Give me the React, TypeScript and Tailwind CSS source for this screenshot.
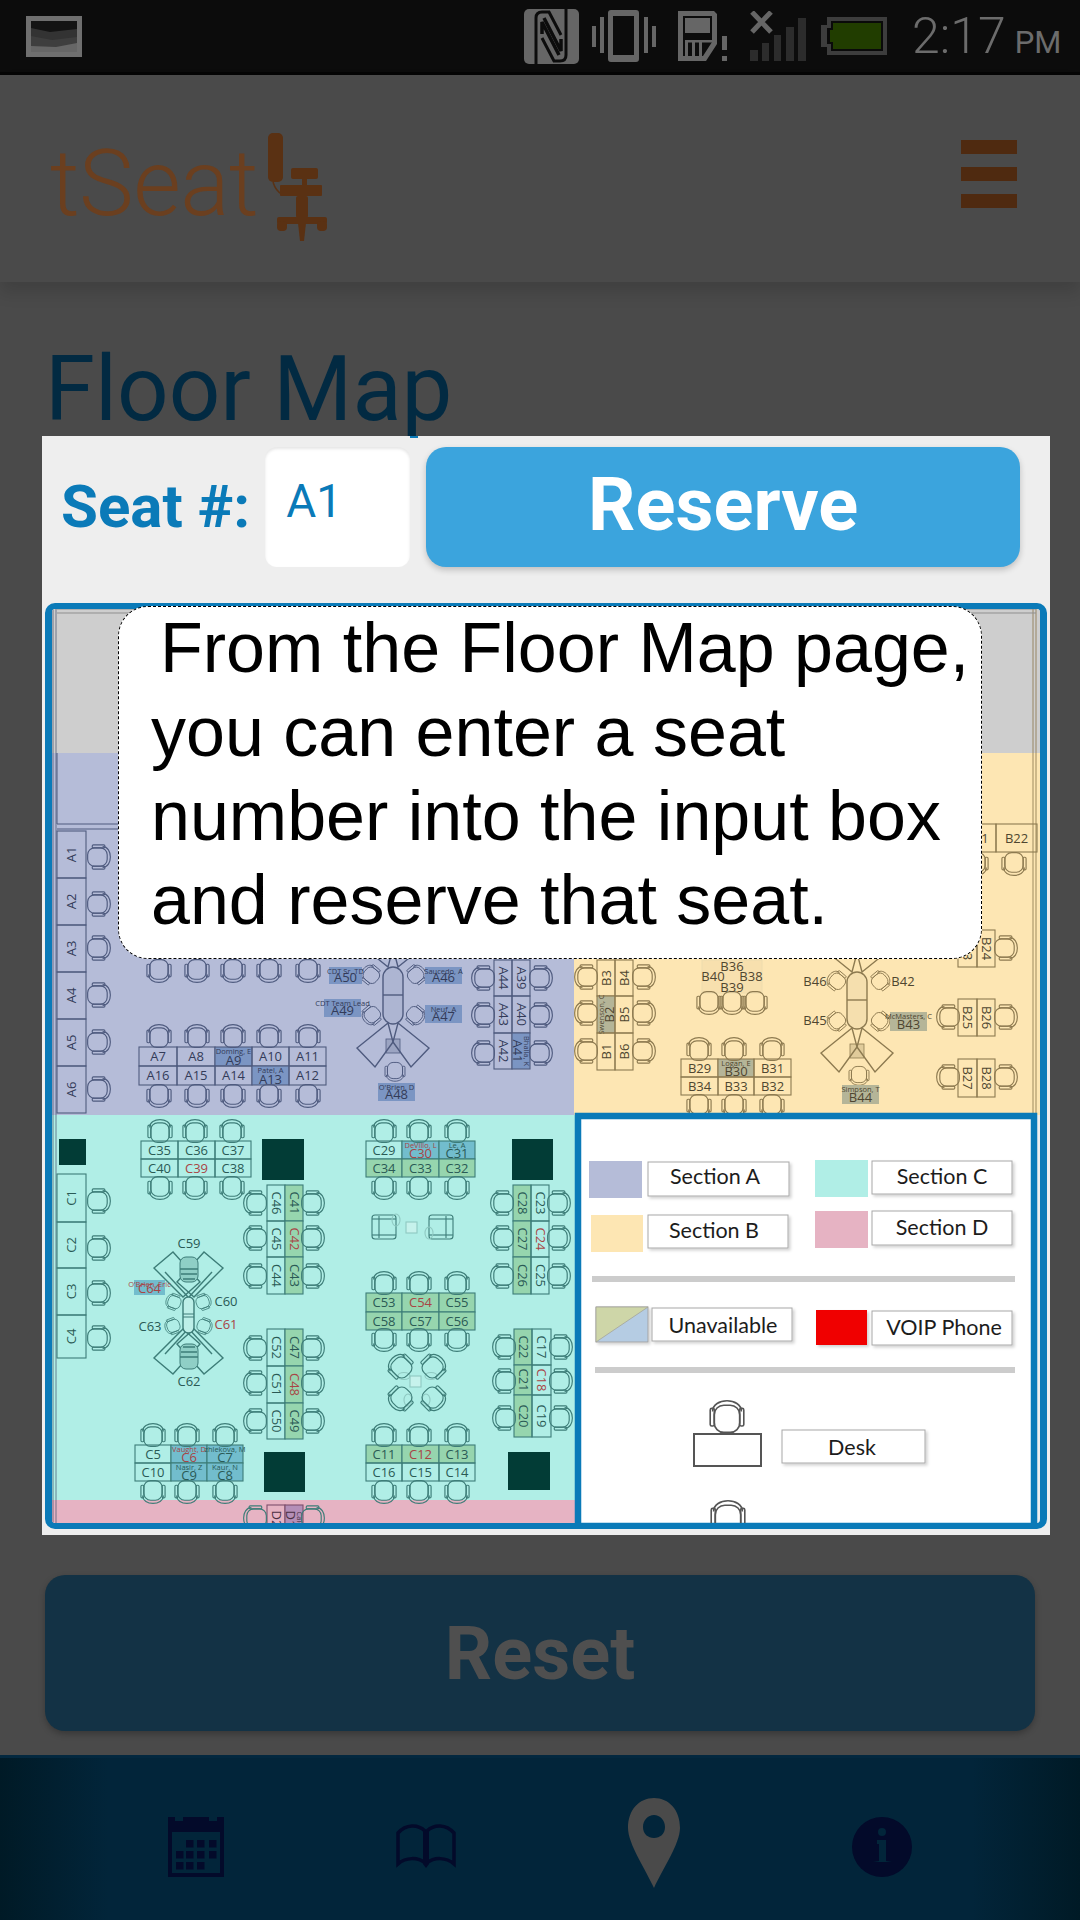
import { Fragment } from 'react';

type Theme = { s: string; t: string };
type Cell = string | { t: string; f?: string; n?: string; red?: boolean; nRed?: boolean };
type Table = { xs: number[]; ys: number[]; cells: Cell[][]; rot?: number; theme: Theme };

const A: Theme = { s: '#4f5b7f', t: '#333b58' };
const B: Theme = { s: '#8d7a50', t: '#4f4630' };
const C: Theme = { s: '#3d7d78', t: '#2a5a55' };
const RED = '#a84545';
const AH = '#7b95c3';
const BH = '#b5b598';
const CG = '#96d5ae';
const CB = '#72bdcd';

const g = (t: string, red = false): Cell => ({ t, f: CG, red });

const tables: Table[] = [
  { theme: A, xs: [57, 86], ys: [831, 878, 925, 972, 1019, 1066, 1113], rot: -90, cells: [['A1'], ['A2'], ['A3'], ['A4'], ['A5'], ['A6']] },
  {
    theme: A,
    xs: [139, 177, 215, 252, 289, 326],
    ys: [1047, 1066, 1085],
    cells: [
      ['A7', 'A8', { t: 'A9', f: AH, n: 'Doming, E' }, 'A10', 'A11'],
      ['A16', 'A15', 'A14', { t: 'A13', f: AH, n: 'Patel, A' }, 'A12'],
    ],
  },
  {
    theme: A,
    xs: [494, 512, 530],
    ys: [960, 996, 1033, 1069],
    rot: 90,
    cells: [['A44', 'A39'], ['A43', 'A40'], ['A42', { t: 'A41', f: AH, n: 'Bhalla, K' }]],
  },
  { theme: B, xs: [958, 996, 1037], ys: [824, 852], cells: [['B21', 'B22']] },
  {
    theme: B,
    xs: [597, 615, 633],
    ys: [960, 996, 1033, 1070],
    rot: -90,
    cells: [['B3', 'B4'], [{ t: 'B2', f: BH, n: 'Swenson, C' }, 'B5'], ['B1', 'B6']],
  },
  {
    theme: B,
    xs: [681, 718, 754, 791],
    ys: [1059, 1077, 1095],
    cells: [
      ['B29', { t: 'B30', f: BH, n: 'Logan, E' }, 'B31'],
      ['B34', 'B33', 'B32'],
    ],
  },
  { theme: B, xs: [958, 977, 995], ys: [930, 967], rot: 90, cells: [['B23', 'B24']] },
  { theme: B, xs: [958, 977, 995], ys: [999, 1036], rot: 90, cells: [['B25', 'B26']] },
  { theme: B, xs: [958, 977, 995], ys: [1059, 1097], rot: 90, cells: [['B27', 'B28']] },
  { theme: C, xs: [57, 86], ys: [1174, 1222, 1268, 1315, 1358], rot: -90, cells: [['C1'], ['C2'], ['C3'], ['C4']] },
  {
    theme: C,
    xs: [141, 178, 215, 251],
    ys: [1141, 1159, 1177],
    cells: [['C35', 'C36', 'C37'], ['C40', { t: 'C39', red: true }, 'C38']],
  },
  {
    theme: C,
    xs: [267, 285, 303],
    ys: [1185, 1221, 1257, 1294],
    rot: 90,
    cells: [['C46', g('C41')], ['C45', g('C42', true)], ['C44', g('C43')]],
  },
  {
    theme: C,
    xs: [267, 285, 303],
    ys: [1329, 1366, 1403, 1439],
    rot: 90,
    cells: [['C52', g('C47')], ['C51', g('C48', true)], ['C50', g('C49')]],
  },
  {
    theme: C,
    xs: [366, 402, 439, 475],
    ys: [1141, 1159, 1177],
    cells: [
      ['C29', { t: 'C30', f: CB, n: 'DeVillo, L', red: true, nRed: true }, { t: 'C31', f: CB, n: 'Le, A' }],
      [g('C34'), g('C33'), g('C32')],
    ],
  },
  {
    theme: C,
    xs: [366, 402, 439, 475],
    ys: [1293, 1312, 1330],
    cells: [[g('C53'), g('C54', true), g('C55')], [g('C58'), g('C57'), g('C56')]],
  },
  {
    theme: C,
    xs: [366, 402, 439, 475],
    ys: [1445, 1463, 1481],
    cells: [[g('C11'), g('C12', true), g('C13')], ['C16', 'C15', 'C14']],
  },
  {
    theme: C,
    xs: [135, 171, 207, 243],
    ys: [1445, 1463, 1481],
    cells: [
      ['C5', { t: 'C6', f: CB, n: 'Vaught, D', red: true, nRed: true }, { t: 'C7', f: CB, n: 'zhlekova, M' }],
      ['C10', { t: 'C9', f: CB, n: 'Nasir, Z' }, { t: 'C8', f: CB, n: 'Kaur, N' }],
    ],
  },
  {
    theme: C,
    xs: [513, 531, 549],
    ys: [1185, 1221, 1257, 1294],
    rot: 90,
    cells: [[g('C28'), 'C23'], [g('C27'), { t: 'C24', red: true }], [g('C26'), 'C25']],
  },
  {
    theme: C,
    xs: [514, 532, 551],
    ys: [1329, 1365, 1395, 1437],
    rot: 90,
    cells: [[g('C22'), 'C17'], [g('C21'), { t: 'C18', red: true }], [g('C20'), 'C19']],
  },
  {
    theme: { s: '#7d4f6c', t: '#4a2f42' },
    xs: [267, 285, 303],
    ys: [1505, 1533],
    rot: 90,
    cells: [['D2', { t: 'D1', f: '#b48fb8', n: 'Cale' }]],
  },
];

// [x, y, rotation, scale?] grouped per section colour
const chairs: [Theme, number[][]][] = [
  [
    A,
    [
      ...[857, 904, 948, 995, 1042, 1089].map((y) => [98, y, 90]),
      ...[159, 197, 233, 269, 308].flatMap((x) => [[x, 970, 180], [x, 1037, 0], [x, 1095, 180]]),
      ...[978, 1015, 1053].flatMap((y) => [[484, y, -90], [540, y, 90]]),
      [371, 975, -50, 0.9], [416, 975, 50, 0.9], [372, 1015, -130, 0.9], [415, 1015, 130, 0.9], [395, 1071, 180, 0.95],
    ],
  ],
  [
    B,
    [
      [1014, 863, 180], [976, 863, 180],
      ...[977, 1013, 1051].flatMap((y) => [[587, y, -90], [643, y, 90]]),
      [709, 1002, 180], [732, 1002, 180], [755, 1002, 180],
      ...[699, 734, 772].flatMap((x) => [[x, 1050, 0], [x, 1105, 180]]),
      [837, 981, -50, 0.9], [880, 981, 50, 0.9], [837, 1021, -130, 0.9], [880, 1021, 130, 0.9], [859, 1075, 180, 0.95],
      [1005, 948, 90],
      [949, 1017, -90], [1005, 1017, 90], [949, 1077, -90], [1005, 1077, 90],
    ],
  ],
  [
    C,
    [
      ...[1201, 1248, 1293, 1338].map((y) => [98, y, 90]),
      ...[160, 195, 232].flatMap((x) => [[x, 1132, 0], [x, 1187, 180]]),
      ...[1203, 1238, 1276, 1348, 1383, 1421].flatMap((y) => [[256, y, -90], [312, y, 90]]),
      ...[384, 419, 457].flatMap((x) => [[x, 1132, 0], [x, 1187, 180], [x, 1284, 0], [x, 1339, 180], [x, 1436, 0], [x, 1491, 180]]),
      ...[153, 187, 225].flatMap((x) => [[x, 1436, 0], [x, 1491, 180]]),
      ...[1203, 1238, 1276].flatMap((y) => [[503, y, -90], [558, y, 90]]),
      ...[1347, 1381, 1418].flatMap((y) => [[505, y, -90], [560, y, 90]]),
      [174, 1302, -70, 0.75], [203, 1302, 70, 0.75], [173, 1326, -110, 0.75], [204, 1326, 110, 0.75],
      [401, 1367, -45], [433, 1367, 45], [401, 1398, -135], [433, 1398, 135],
      [256, 1518, -90], [312, 1518, 90],
    ],
  ],
];

const nameBoxes: [string, string, string, number, number, number, number, Theme, string?][] = [
  ['A50', 'CDT Sr. TD', AH, 329, 967, 33, 17, A],
  ['A46', 'Saucedo, A', AH, 425, 967, 37, 17, A],
  ['A49', 'CDT Team Lead', AH, 324, 999, 37, 18, A],
  ['A47', 'Neuf, A', AH, 425, 1005, 37, 18, A],
  ['A48', "O'Brien, D", AH, 378, 1083, 37, 18, A],
  ['B44', 'Simpson, T', BH, 842, 1085, 37, 19, B],
  ['B43', 'McMasters, C', BH, 890, 1012, 37, 19, B],
  ['C64', "O'Brien, Eric", CB, 134, 1280, 31, 15, C, RED],
];

const freeLabels: [string, number, number, string][] = [
  ['B36', 732, 971, B.t], ['B40', 713, 981, B.t], ['B38', 751, 981, B.t], ['B39', 732, 992, B.t],
  ['B46', 815, 986, B.t], ['B45', 815, 1025, B.t], ['B42', 903, 986, B.t],
  ['C59', 189, 1248, C.t], ['C60', 226, 1306, C.t], ['C63', 150, 1331, C.t], ['C61', 226, 1329, RED], ['C62', 189, 1386, C.t],
];

const darkSquares = [
  [59, 1139, 27, 26],
  [262, 1139, 42, 41],
  [512, 1139, 41, 41],
  [264, 1452, 41, 40],
  [508, 1452, 42, 38],
];

// label, box x, y, w, h, text centre, text baseline
const legendItems: [string, number, number, number, number, number, number][] = [
  ['Section A', 648, 1162, 141, 34, 715, 1184],
  ['Section B', 648, 1215, 140, 33, 714, 1238],
  ['Section C', 872, 1161, 140, 33, 942, 1184],
  ['Section D', 872, 1211, 140, 34, 942, 1235],
  ['Unavailable', 652, 1308, 140, 33, 723, 1333],
  ['VOIP Phone', 872, 1311, 140, 34, 944, 1335],
  ['Desk', 782, 1430, 143, 33, 852, 1455],
];

function Chair({ x, y, rot, color, scale = 1.15 }: { x: number; y: number; rot: number; color: string; scale?: number }) {
  return (
    <g transform={`translate(${x} ${y}) rotate(${rot}) scale(${scale})`} fill="none" stroke={color} strokeWidth={1}>
      <rect x={-8} y={-8} width={16} height={17} rx={6} />
      <path d="M-9 -4 C-9 -13 9 -13 9 -4" />
      <rect x={-10.5} y={-6} width={2.6} height={11} rx={1} />
      <rect x={7.9} y={-6} width={2.6} height={11} rx={1} />
    </g>
  );
}

function DeskTable({ table }: { table: Table }) {
  const { xs, ys, cells, rot = 0, theme } = table;
  return (
    <g>
      {cells.map((row, r) =>
        row.map((raw, c) => {
          const cell = typeof raw === 'string' ? { t: raw } : raw;
          const w = xs[c + 1] - xs[c];
          const h = ys[r + 1] - ys[r];
          const local = rot ? w : h;
          const col = cell.red ? RED : theme.t;
          return (
            <g key={`${r}-${c}`}>
              <rect x={xs[c]} y={ys[r]} width={w} height={h} fill={cell.f ?? 'none'} stroke={theme.s} strokeWidth={1.1} />
              <g transform={`translate(${xs[c] + w / 2} ${ys[r] + h / 2}) rotate(${rot})`} textAnchor="middle">
                {cell.n ? (
                  <>
                    <text y={-local / 2 + 6.5} fontSize={7.5} fill={cell.nRed ? RED : theme.t}>{cell.n}</text>
                    <text y={local / 2 - 1} fontSize={13} fill={col}>{cell.t}</text>
                  </>
                ) : (
                  <text y={4.5} fontSize={13} fill={col}>{cell.t}</text>
                )}
              </g>
            </g>
          );
        }),
      )}
    </g>
  );
}

function PodWings({ cx, cy, color, fill }: { cx: number; cy: number; color: string; fill: string }) {
  const wing = (sx: number, sy: number) =>
    [[5, 28], [36, 53], [18, 72], [0, 47]].map(([a, b]) => `${cx + sx * a},${cy + sy * b}`).join(' ');
  return (
    <g stroke={color} strokeWidth={1.4} fill="none">
      {[-1, 1].map((sy) => (
        <Fragment key={sy}>
          <polygon points={wing(-1, sy)} />
          <polygon points={wing(1, sy)} />
          <rect x={cx - 7} y={sy > 0 ? cy + 44 : cy - 58} width={14} height={14} fill={color} fillOpacity={0.25} strokeWidth={0.8} />
        </Fragment>
      ))}
      <rect x={cx - 10} y={cy - 28} width={20} height={57} rx={10} fill={fill} />
      <line x1={cx - 10} y1={cy} x2={cx + 10} y2={cy} />
    </g>
  );
}

function PodC() {
  // top half in page coordinates, the bottom half mirrors it around the oval
  const pts = (list: number[][], mx: boolean, my: boolean) =>
    list.map(([x, y]) => `${mx ? 377 - x : x},${my ? 2626 - y : y}`).join(' ');
  const strip = [[154, 1268], [173, 1252], [200, 1282], [183, 1297]];
  const inner = [[165, 1272], [188, 1297]];
  return (
    <g stroke={C.s} strokeWidth={1.4} fill="none">
      {[false, true].map((my) => (
        <Fragment key={String(my)}>
          {[false, true].map((mx) => (
            <Fragment key={String(mx)}>
              <polygon points={pts(strip, mx, my)} />
              <polyline points={pts(inner, mx, my)} />
            </Fragment>
          ))}
          <g transform={my ? 'translate(0 2626) scale(1 -1)' : undefined}>
            <rect x={180} y={1257} width={18} height={25} rx={6} fill="#8fcfc6" strokeWidth={1} />
            <path d="M180 1269H198M181 1274H197M183 1279H195" strokeWidth={1.6} />
          </g>
        </Fragment>
      ))}
      <rect x={183} y={1297} width={11} height={36} rx={5.5} fill="#bdefe8" />
      <path d="M183 1314H194M183 1317H194" strokeWidth={1} />
    </g>
  );
}

function Lounge() {
  return (
    <g fill="none" stroke={C.s} strokeWidth={1.1}>
      <rect x={372} y={1215} width={24} height={24} rx={3} />
      <line x1={379} y1={1216} x2={379} y2={1238} />
      <line x1={372} y1={1219} x2={396} y2={1219} />
      <line x1={372} y1={1235} x2={396} y2={1235} />
      <rect x={429} y={1215} width={24} height={24} rx={3} />
      <line x1={446} y1={1216} x2={446} y2={1238} />
      <line x1={429} y1={1219} x2={453} y2={1219} />
      <line x1={429} y1={1235} x2={453} y2={1235} />
      <ellipse cx={396} cy={1220} rx={4} ry={6} stroke="#8fc9c2" />
      <ellipse cx={429} cy={1233} rx={4} ry={6} stroke="#8fc9c2" />
      <rect x={406} y={1222} width={11} height={11} stroke="#8fc9c2" fill="#c6f2ec" />
      <rect x={410} y={1376} width={11} height={11} stroke="#8fc9c2" fill="#c6f2ec" />
      <ellipse cx={404} cy={1376} rx={6} ry={3.5} stroke="#8fc9c2" />
      <ellipse cx={431} cy={1376} rx={6} ry={3.5} stroke="#8fc9c2" />
      <ellipse cx={408} cy={1400} rx={4} ry={6} stroke="#8fc9c2" />
      <ellipse cx={426} cy={1400} rx={4} ry={6} stroke="#8fc9c2" />
    </g>
  );
}

function FloorMap() {
  return (
    <svg viewBox="52 609 988 914" className="block w-[988px] h-[914px] rounded-[3px] font-['Open_Sans',sans-serif]">
      <defs>
        <filter id="soft" x="-10%" y="-10%" width="125%" height="130%">
          <feDropShadow dx="2" dy="2" stdDeviation="1.5" floodColor="#000" floodOpacity="0.18" />
        </filter>
      </defs>
      <rect x={52} y={609} width={988} height={144} fill="#cecece" />
      <rect x={52} y={753} width={523} height={362} fill="#b5bcd8" />
      <rect x={574} y={753} width={466} height={362} fill="#fde6b3" />
      <rect x={52} y={1115} width={523} height={385} fill="#b0eee6" />
      <rect x={52} y={1500} width={523} height={23} fill="#e6b3c3" />

      <rect x={702} y={960} width={60} height={33} fill="#f7e0ae" stroke="#eedcae" />
      <path d="M53 609V1523M56 609V1523" stroke="#44506e" strokeWidth={1} opacity={0.7} />
      <path d="M1033 609V1120M1036 609V1120" stroke="#8d7a50" strokeWidth={1} opacity={0.85} />
      <path d="M57 609H1036M57 613H1036" stroke="#8f8f8f" strokeWidth={1} />
      <path d="M57 824H118M57 829H118M57 753V824" stroke={A.s} strokeWidth={1} fill="none" />

      {darkSquares.map(([x, y, w, h]) => (
        <rect key={`${x}-${y}`} x={x} y={y} width={w} height={h} fill="#023c36" />
      ))}

      <PodWings cx={393} cy={995} color={A.s} fill="#adb5d2" />
      <PodWings cx={857} cy={1000} color={B.s} fill="#f5dfae" />
      <PodC />
      <Lounge />

      {tables.map((t, i) => (
        <DeskTable key={i} table={t} />
      ))}

      {chairs.map(([theme, pts], i) =>
        pts.map(([x, y, rot, scale], j) => <Chair key={`${i}-${j}`} x={x} y={y} rot={rot} scale={scale} color={theme.s} />),
      )}

      {nameBoxes.map(([id, name, fill, x, y, w, h, theme, tone]) => (
        <g key={id} textAnchor="middle">
          <rect x={x} y={y} width={w} height={h} fill={fill} />
          <text x={x + w / 2} y={y + 6.5} fontSize={7.5} fill={tone ?? theme.t}>{name}</text>
          <text x={x + w / 2} y={y + h - 2} fontSize={13} fill={tone ?? theme.t}>{id}</text>
        </g>
      ))}

      {freeLabels.map(([t, x, y, fill]) => (
        <text key={t} x={x} y={y} fontSize={13} fill={fill} textAnchor="middle">{t}</text>
      ))}

      {/* legend */}
      <rect x={578} y={1116} width={456} height={410} fill="#fff" stroke="#0a7ab8" strokeWidth={6.5} />
      <rect x={589} y={1161} width={53} height={37} fill="#b5bcd8" />
      <rect x={591} y={1215} width={52} height={37} fill="#fde6b3" />
      <rect x={815} y={1160} width={53} height={37} fill="#b0eee6" />
      <rect x={815} y={1211} width={53} height={37} fill="#e6b3c3" />
      <rect x={592} y={1276} width={423} height={6} fill="#cccccc" />
      <rect x={595} y={1367} width={420} height={6} fill="#cccccc" />
      <g filter="url(#soft)">
        <rect x={596} y={1307} width={52} height={35} fill="#b5cce3" stroke="#a5a5a5" />
      </g>
      <polygon points="596,1307 648,1307 596,1342" fill="#ced6a8" stroke="#a5a59a" strokeWidth={0.8} />
      <rect x={816} y={1310} width={51} height={35} fill="#f00000" filter="url(#soft)" />
      {legendItems.map(([t, x, y, w, h, mid, base]) => (
        <g key={t}>
          <rect x={x} y={y} width={w} height={h} fill="#fff" stroke="#a8a8a8" filter="url(#soft)" />
          <text x={mid} y={base} fontSize={21.5} fill="#1c1c1c" textAnchor="middle" className="font-['Lato',sans-serif]">{t}</text>
        </g>
      ))}
      <Chair x={727} y={1418} rot={0} color="#555" scale={1.6} />
      <rect x={694} y={1434} width={67} height={32} fill="#fff" stroke="#555" strokeWidth={2} />
      <Chair x={728} y={1518} rot={0} color="#555" scale={1.6} />
    </svg>
  );
}

function StatusIcons() {
  return (
    <div className="flex items-center">
      {/* NFC */}
      <svg width="55" height="55" viewBox="0 0 55 55" className="mr-[13px]" fill="none" stroke="#0c0c0c">
        <rect width="55" height="55" rx="5" fill="#666" stroke="none" />
        <path d="M12 55V9C12 5 14 3 18 3H25L37 26" strokeWidth="3" />
        <path d="M42 0V46C42 50 40 52 36 52H30L18 29" strokeWidth="3" />
        <path d="M20 9L37 42V30" strokeWidth="3.5" />
        <path d="M35 46L18 13V25" strokeWidth="3.5" />
      </svg>
      {/* vibrate */}
      <svg width="64" height="52" viewBox="0 0 64 52" className="mr-[22px]" fill="#666">
        <rect x="0" y="16" width="4" height="21" />
        <rect x="8" y="7" width="4" height="36" />
        <path fillRule="evenodd" d="M19 0H44A3 3 0 0 1 47 3V49A3 3 0 0 1 44 52H19A3 3 0 0 1 16 49V3A3 3 0 0 1 19 0ZM21 6V45H42V6Z" />
        <rect x="52" y="7" width="4" height="36" />
        <rect x="60" y="16" width="4" height="21" />
      </svg>
      {/* sim */}
      <svg width="50" height="51" viewBox="0 0 50 51" className="mr-[22px]" fill="#666">
        <path fillRule="evenodd" d="M0 0H36L39 3V33L28 50H0ZM5 5V45H25L34 31V5Z" />
        <rect x="7" y="7" width="25" height="15" />
        <rect x="7" y="29" width="27" height="2.5" />
        <rect x="7" y="31" width="3" height="15" />
        <rect x="14" y="31" width="3" height="15" />
        <rect x="21" y="31" width="3" height="15" />
        <rect x="44" y="25" width="5" height="14" />
        <rect x="44" y="45" width="5" height="5" />
      </svg>
      {/* signal */}
      <svg width="56" height="50" viewBox="0 0 56 50" className="mr-[15px]">
        <path d="M2 1L21 21M21 1L2 21" stroke="#666" strokeWidth="5" />
        <rect x="0" y="39" width="8" height="11" fill="#2c2c2c" />
        <rect x="12" y="32" width="7" height="18" fill="#2c2c2c" />
        <rect x="24" y="24" width="7" height="26" fill="#2c2c2c" />
        <rect x="36" y="16" width="8" height="34" fill="#2c2c2c" />
        <rect x="48" y="7" width="8" height="43" fill="#2c2c2c" />
      </svg>
      {/* battery */}
      <svg width="66" height="38" viewBox="0 0 66 38" className="mr-[25px]">
        <path d="M6 0H66V38H6V30H0V8H6Z" fill="#3d3d3d" />
        <path d="M10 4H62V34H10V27H6V11H10Z" fill="#0a0a0a" />
        <path d="M12 6H60V32H12V25H9V13H12Z" fill="#213d00" />
      </svg>
      <div className="flex items-baseline w-[148px] font-['Roboto',sans-serif] text-[#6c6c6c]">
        <span className="text-[50px] leading-none font-light">2:17</span>
        <span className="ml-[9px] text-[31px] leading-none">PM</span>
      </div>
    </div>
  );
}

function LogoChair() {
  return (
    <svg width="60" height="108" viewBox="0 0 60 108" fill="#5a3113" className="ml-[9px] mb-[-16px]">
      <rect x="1" y="0" width="15" height="49" rx="5" />
      <path d="M6 49C8 56 12 60 16 62" stroke="#5a3113" strokeWidth="1.5" fill="none" />
      <rect x="24" y="35" width="27" height="11" rx="2" />
      <rect x="35" y="46" width="5" height="8" />
      <rect x="13" y="52" width="42" height="11" rx="1" />
      <rect x="29" y="63" width="12" height="22" rx="2" />
      <rect x="10" y="84" width="50" height="7" rx="2" />
      <rect x="10" y="88" width="10" height="10" rx="4" />
      <rect x="50" y="88" width="10" height="10" rx="4" />
      <path d="M31 90H39L37 108H33Z" />
    </svg>
  );
}

function NavIcons() {
  const cells = [[18, 23], [29, 23], [41, 23], [8, 34], [18, 34], [29, 34], [41, 34], [8, 45], [18, 45], [29, 45]];
  return (
    <div className="h-[165px] shrink-0 flex items-center bg-[linear-gradient(90deg,#001a26,#02253a_10%,#02253a_90%,#001a26)] border-t-[3px] border-[#03283f]">
      <div className="w-[168px]" />
      <svg width="56" height="60" viewBox="0 0 56 60" fill="#030a2a" className="mt-[15px]">
        <path fillRule="evenodd" d="M0 0H7V4H15V0H41V4H49V0H56V60H0ZM4 15V56H52V15Z" />
        {cells.map(([x, y]) => (
          <rect key={`${x}-${y}`} x={x} y={y} width="7.5" height="7.5" />
        ))}
      </svg>
      <svg width="60" height="44" viewBox="0 0 60 44" fill="none" stroke="#030a2a" strokeWidth="3.5" className="ml-[172px] mt-[13px]">
        <path d="M2 40V9C10 0 22 0 29 7V39C22 33 10 33 2 40Z" />
        <path d="M58 40V9C50 0 38 0 31 7V39C38 33 50 33 58 40Z" />
        <path d="M27 7H33V40L30 44L27 40Z" fill="#030a2a" stroke="none" />
      </svg>
      <svg width="52" height="90" viewBox="0 0 52 90" className="ml-[172px] mt-[7px]">
        <path fillRule="evenodd" fill="#4a4a4a" d="M26 0C41 0 52 12 52 30C52 46 34 72 26 90C18 72 0 46 0 30C0 12 11 0 26 0ZM26 17C20 17 15 22 15 29C15 36 20 40 26 40C32 40 37 36 37 29C37 22 32 17 26 17Z" />
      </svg>
      <svg width="60" height="60" viewBox="0 0 60 60" className="ml-[172px] mt-[15px]">
        <circle cx="30" cy="30" r="30" fill="#030a2a" />
        <ellipse cx="30" cy="15" rx="4" ry="4" fill="#02253a" />
        <path d="M25 23H34V44L40 45H21L27 44V27H25Z" fill="#02253a" />
      </svg>
    </div>
  );
}

export default function App() {
  return (
    <div className="relative w-[1080px] h-[1920px] overflow-hidden flex flex-col bg-[#4a4a4a] font-['Roboto',sans-serif]">
      <div className="h-[75px] shrink-0 flex items-center justify-between pl-[26px] pr-[20px] bg-[#0c0c0c] border-b-[3px] border-[#050505]">
        <svg width="56" height="41" viewBox="0 0 56 41">
          <rect width="56" height="41" fill="#6f6f6f" />
          <rect x="5" y="5" width="46" height="31" fill="#141414" />
          <path d="M5 12L24 16L51 13V36H5Z" fill="#333" />
          <path d="M5 20L26 24L51 21V36H5Z" fill="#3e3e3e" />
          <path d="M5 30L30 31L51 27V36H5Z" fill="#666" />
        </svg>
        <StatusIcons />
      </div>

      <header className="h-[207px] shrink-0 flex items-center justify-between pl-[50px] pr-[63px] shadow-[0_10px_16px_rgba(0,0,0,0.14)] z-[1]">
        <div className="flex items-center">
          <span className="text-[92px] leading-none font-light tracking-[-0.5px] text-[#6b3f1f] mt-[10px]">tSeat</span>
          <LogoChair />
        </div>
        <div className="flex flex-col gap-[13px] mb-[10px]">
          <div className="w-[56px] h-[14px] bg-[#4f2a10]" />
          <div className="w-[56px] h-[14px] bg-[#4f2a10]" />
          <div className="w-[56px] h-[14px] bg-[#4f2a10]" />
        </div>
      </header>

      <main className="flex-1 flex flex-col justify-between px-[45px] pb-[24px] pt-[55px]">
        <h1 className="text-[90.5px] leading-[105px] font-normal text-[#022a42]">Floor Map</h1>
        <button className="w-[990px] h-[156px] rounded-[20px] bg-[#133245] text-[#4f4f4f] text-[74px] font-bold shadow-[0_3px_6px_rgba(0,0,0,0.25)]">
          Reset
        </button>
      </main>

      <NavIcons />

      <div className="absolute left-[42px] top-[436px] w-[1008px] h-[1099px] bg-[#eeeeee] z-10 pt-[11px] px-[3px]">
        <div className="absolute left-[368px] top-0 w-[8px] h-[2px] bg-[#0a7ab8]" />
        <div className="flex items-center h-[120px]">
          <label className="ml-[16px] text-[60px] font-bold text-[#0a7ab8] leading-none">Seat #:</label>
          <input
            readOnly
            value="A1"
            className="ml-[15px] w-[145px] h-[120px] rounded-[12px] bg-white pl-[21px] pb-[12px] text-[46px] text-[#0a7ab8] shadow-[inset_0_2px_3px_rgba(0,0,0,0.1)] outline-none"
          />
          <button className="ml-[16px] w-[594px] h-[120px] rounded-[20px] bg-[#3ba4dd] text-white text-[74px] font-bold leading-none pb-[4px] shadow-[0_3px_6px_rgba(0,0,0,0.2)]">
            Reserve
          </button>
        </div>

        <div className="relative mt-[36px] w-[1002px] h-[926px] border-x-[7px] border-y-[6px] border-[#0a7ab8] rounded-[10px]">
          <FloorMap />
          <div className="absolute left-[66px] top-[-3px] w-[864px] h-[353px] bg-white rounded-[30px] border border-dashed border-black pl-[32px] font-['Liberation_Sans',sans-serif] text-[70px] leading-[84px] text-black whitespace-pre">
            <p className="pl-[9px] mt-[-1px]">From the Floor Map page,</p>
            <p>you can enter a seat</p>
            <p>number into the input box</p>
            <p>and reserve that seat.</p>
          </div>
        </div>
      </div>
    </div>
  );
}
